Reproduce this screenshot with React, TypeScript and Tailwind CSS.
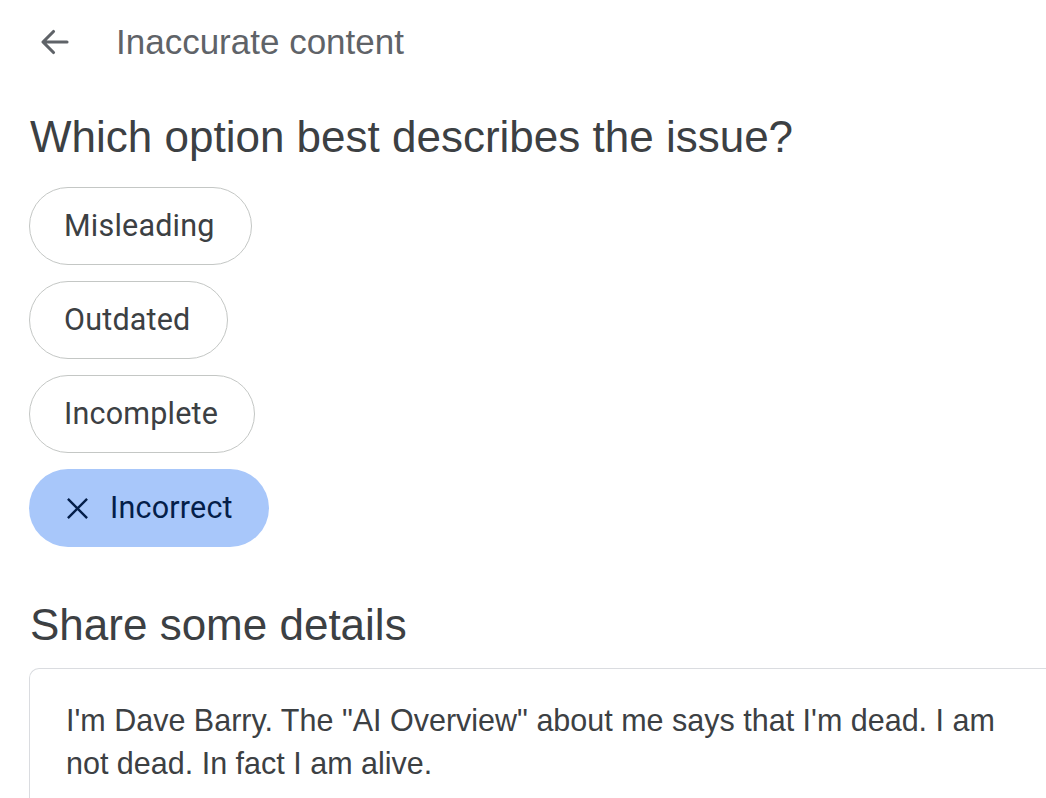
import { useState } from 'react';

const OPTIONS = ['Misleading', 'Outdated', 'Incomplete', 'Incorrect'];

function BackArrow() {
  return (
    <svg width="36" height="36" viewBox="0 0 24 24" fill="none">
      <path
        d="M20 12H4.5M11 5l-7 7 7 7"
        stroke="#5f6368"
        strokeWidth="2.1"
        strokeLinecap="round"
        strokeLinejoin="round"
      />
    </svg>
  );
}

function CloseIcon() {
  return (
    <svg width="23" height="23" viewBox="0 0 24 24" fill="none">
      <path d="M2 2l20 20M22 2L2 22" stroke="#041e49" strokeWidth="2.5" />
    </svg>
  );
}

export default function App() {
  const [selected, setSelected] = useState('Incorrect');

  return (
    <div className="min-h-screen bg-white font-[family-name:'Liberation_Sans',Arial,sans-serif] overflow-hidden">
      <div className="flex items-center h-[84px] pl-[37px]">
        <BackArrow />
        <span className="ml-[43px] text-[35px] text-[#5f6368]">Inaccurate content</span>
      </div>

      <h1 className="pl-[30px] mt-[27px] text-[44px] leading-[52px] text-[#3c4043]">
        Which option best describes the issue?
      </h1>

      <div className="flex flex-col items-start gap-4 pl-[29px] mt-[24px]">
        {OPTIONS.map((o) => {
          const active = selected === o;
          return (
            <button
              key={o}
              onClick={() => setSelected(o)}
              className={
                active
                  ? "flex items-center h-[78px] pl-[37px] pr-[36px] rounded-full bg-[#a8c7fa] text-[#041e49] font-[family-name:Roboto,sans-serif] text-[30.5px] tracking-[0.2px]"
                  : "flex items-center h-[78px] pl-[34px] pr-[36px] rounded-full border-[1.5px] border-[#c4c7c5] text-[#3c4043] font-[family-name:Roboto,sans-serif] text-[30.5px] tracking-[0.2px]"
              }
            >
              {active && (
                <span className="mr-[21px] flex">
                  <CloseIcon />
                </span>
              )}
              {o}
            </button>
          );
        })}
      </div>

      <h2 className="pl-[30px] mt-[52px] text-[44px] leading-[52px] text-[#3c4043]">
        Share some details
      </h2>

      <div className="ml-[29px] mt-[17px] border-[1.5px] border-r-0 border-[#dadce0] rounded-tl-[10px] h-[200px] pl-[36px] pt-[30px] pr-[12px]">
        <p className="text-[30.5px] leading-[43px] text-[#3c4043]">
          I'm Dave Barry. The "AI Overview" about me says that I'm dead. I am not dead. In fact I am alive.
        </p>
      </div>
    </div>
  );
}
